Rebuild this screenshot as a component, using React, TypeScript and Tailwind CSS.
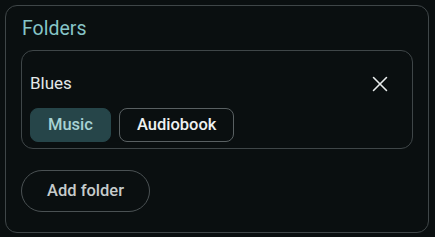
import { X } from "lucide-react";

const TAGS = [
  { label: "Music", active: true },
  { label: "Audiobook", active: false },
];

export default function App() {
  return (
    <div
      className="w-[435px] h-[237px] bg-[#0a0f10] p-[5px] pr-[6px]"
      style={{ fontFamily: "Roboto, 'Noto Sans', sans-serif" }}
    >
      <div className="h-[228px] rounded-[12px] border border-[#3f4648] px-[15px] pt-[11px] pb-[19px] flex flex-col">
        <h2 className="text-[19.5px] leading-[24px] text-[#86c4c7] pl-px">Folders</h2>

        <div className="mt-[9px] rounded-[12px] border border-[#3f4648] px-2 pt-[13px] pb-[6px]">
          <div className="flex items-center justify-between h-[40px]">
            <span className="text-[17px] text-[#e4e8e8]">Blues</span>
            <X className="w-[26px] h-[26px] mr-[11px] text-[#e8ecec]" strokeWidth={1.4} />
          </div>
          <div className="mt-[4px] flex gap-2">
            {TAGS.map((t) => (
              <span
                key={t.label}
                className={`h-[34px] px-[17px] flex items-center rounded-[8px] border text-[16.5px] font-medium ${
                  t.active
                    ? "bg-[#264549] border-[#264549] text-[#a6d2d4]"
                    : "border-[#596062] text-[#eef1f1]"
                }`}
              >
                {t.label}
              </span>
            ))}
          </div>
        </div>

        <button className="mt-[21px] self-start h-[42px] w-[129px] rounded-full border border-[#4a5153] text-[16.5px] font-medium text-[#c6cbcb]">
          Add folder
        </button>
      </div>
    </div>
  );
}
